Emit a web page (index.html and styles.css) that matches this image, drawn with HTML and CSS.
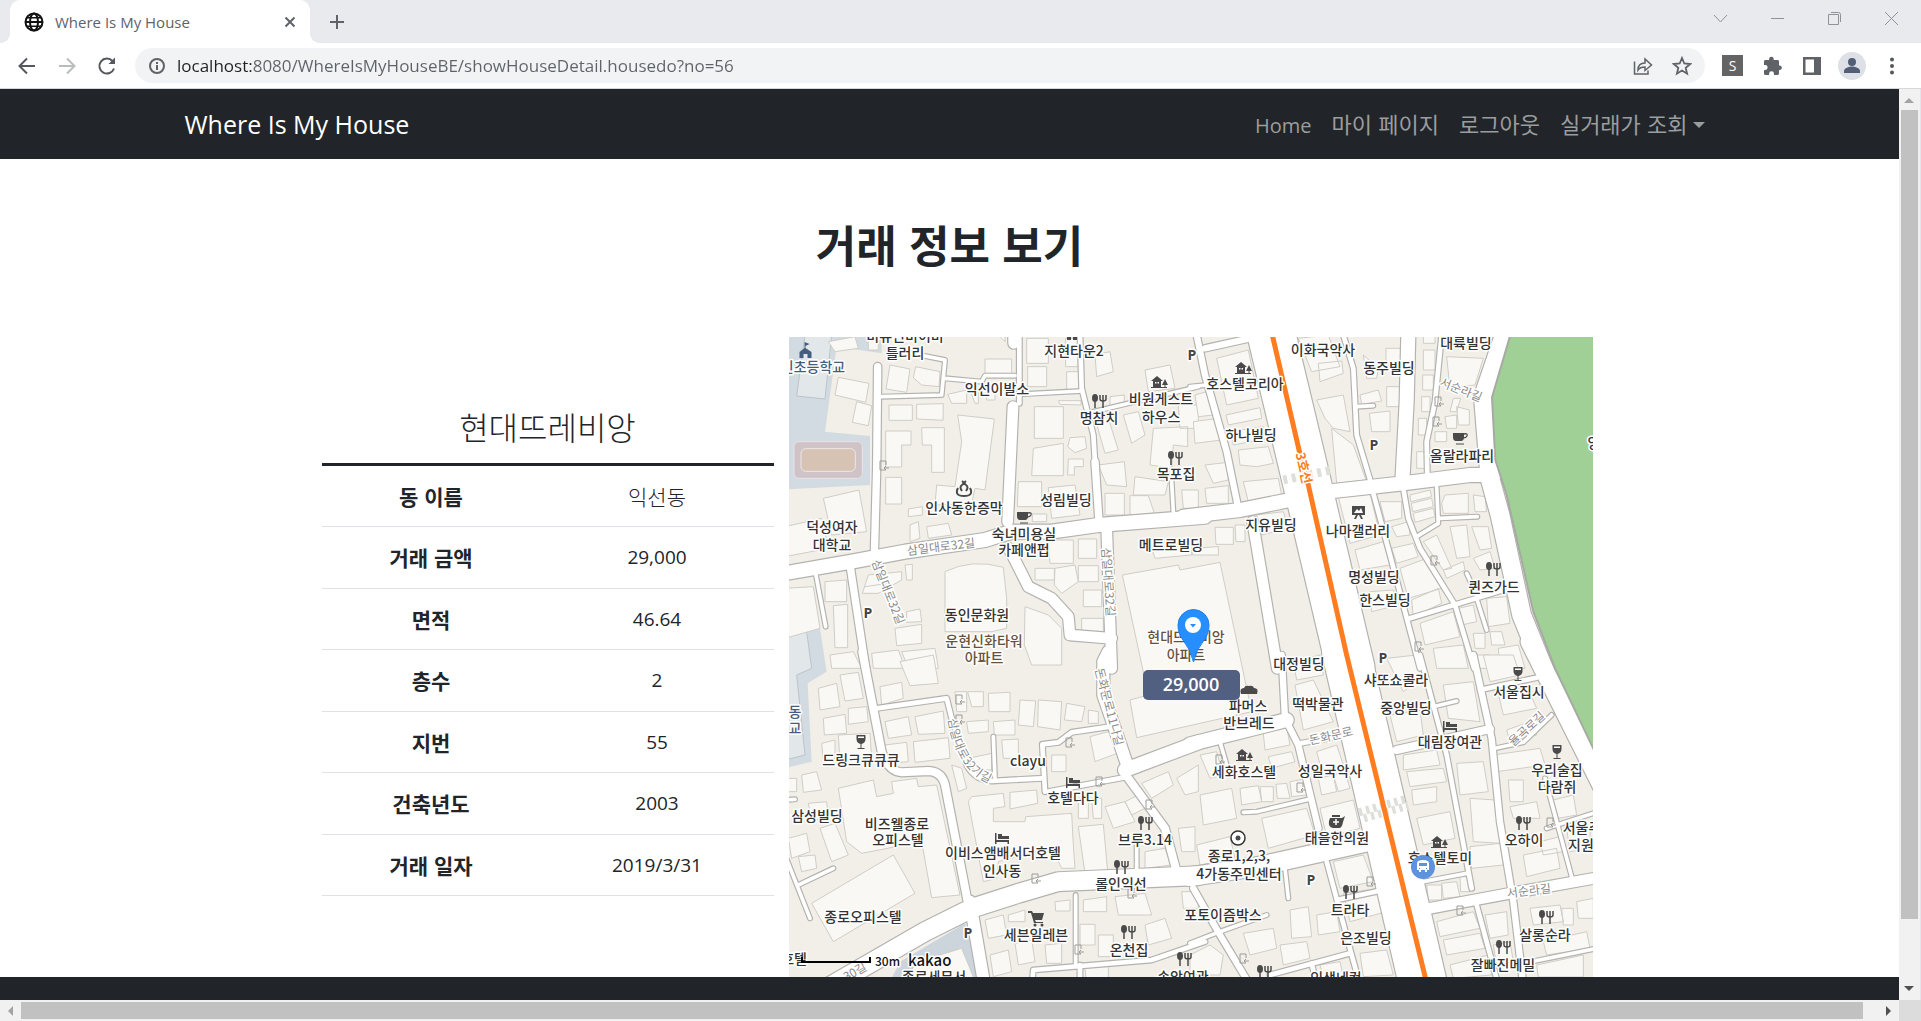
FILE: index.html
```html
<!DOCTYPE html>
<html lang="ko">
<head>
<meta charset="utf-8">
<title>Where Is My House</title>
<link rel="stylesheet" href="styles.css">
</head>
<body>
<div class="window">
  <header class="tabstrip">
    <div class="tab">
      <svg class="ico" width="20" height="20" viewBox="0 0 20 20" fill="none" stroke="#111" stroke-width="2"><circle cx="10" cy="10" r="8.5"/><ellipse cx="10" cy="10" rx="4" ry="8.5"/><path d="M1.5 10h17"/><path d="M3 5.8h14M3 14.2h14" stroke-width="1.4"/></svg>
      <span class="tab-title">Where Is My House</span>
      <button class="plain" aria-label="Close tab"><svg width="12" height="12" viewBox="0 0 12 12" stroke="#5f6368" stroke-width="2"><path d="M1.5 1.5l9 9M10.500 1.500l-9 9"/></svg></button>
    </div>
    <button class="plain newtab" aria-label="New tab"><svg width="16" height="16" viewBox="0 0 16 16" stroke="#5f6368" stroke-width="2"><path d="M8 1v14M1 8h14"/></svg></button>
    <div class="wincontrols">
      <button class="plain" aria-label="Search tabs"><svg width="15" height="15" viewBox="0 0 15 15" fill="none" stroke="#8f9296"><path d="M1 4l6.500 7L14 4"/></svg></button>
      <button class="plain" aria-label="Minimize"><svg width="15" height="15" viewBox="0 0 15 15" stroke="#8f9296"><path d="M1 7.500h13"/></svg></button>
      <button class="plain" aria-label="Restore"><svg width="15" height="15" viewBox="0 0 15 15" fill="none" stroke="#8f9296"><path d="M1.500 3.500h10v10h-10zM4 1.500h7.500q2 0 2 2V11"/></svg></button>
      <button class="plain" aria-label="Close"><svg width="15" height="15" viewBox="0 0 15 15" stroke="#8f9296"><path d="M1 1l13 13M14 1L1 14"/></svg></button>
    </div>
  </header>

  <div class="toolbar">
    <div class="navbuttons">
      <button class="plain" aria-label="Back"><svg width="20" height="20" viewBox="0 0 20 20" fill="none" stroke="#54585d" stroke-width="2"><path d="M18 10H3M10 2.500L2.500 10l7.500 7.500"/></svg></button>
      <button class="plain" aria-label="Forward"><svg width="20" height="20" viewBox="0 0 20 20" fill="none" stroke="#babcbe" stroke-width="2"><path d="M2 10h15M10 2.500l7.500 7.500-7.500 7.500"/></svg></button>
      <button class="plain" aria-label="Reload"><svg width="20" height="20" viewBox="0 0 20 20" fill="none" stroke="#54585d" stroke-width="2"><path d="M17 12.500A7.500 7.500 0 1 1 15.500 5"/><path d="M18 1.500v6.500h-6.500z" fill="#54585d" stroke="none"/></svg></button>
    </div>
    <div class="omnibox">
      <svg width="18" height="18" viewBox="0 0 18 18" fill="none" stroke="#5f6368" stroke-width="2"><circle cx="9" cy="9" r="7"/><path d="M9 8v5M9 5v2"/></svg>
      <input class="url" aria-label="Address" value="localhost:8080/WhereIsMyHouseBE/showHouseDetail.housedo?no=56">
      <button class="plain" aria-label="Share"><svg width="20" height="20" viewBox="0 0 20 20" fill="none" stroke="#5f6368" stroke-width="1.500"><path d="M1.500 5.500V18H15v-3.500M5 14c0-5 3-7 7-7V3l6.500 6-6.500 5.500V11c-3.500 0-5.500.5-7 3z"/></svg></button>
      <button class="plain" aria-label="Bookmark"><svg width="20" height="20" viewBox="0 0 20 20" fill="none" stroke="#5f6368" stroke-width="1.800"><path d="M10 2l2.300 5.500 5.900.5-4.500 3.900 1.400 5.800L10 14.600l-5.100 3.100 1.400-5.800L1.800 8l5.900-.5z"/></svg></button>
    </div>
    <div class="extensions">
      <button class="plain ext-s" aria-label="S extension">S</button>
      <button class="plain" aria-label="Extensions"><svg width="20" height="20" viewBox="0 0 20 20" fill="#5f6368"><path d="M17 9.500h-1V5.500c0-1-.7-1.500-1.500-1.500h-3.800V3a2.300 2.300 0 0 0-4.600 0v1H2.500C1.600 4 1 4.600 1 5.500v3.600h1.200a2.400 2.400 0 0 1 0 4.900H1v3.500c0 .9.600 1.500 1.500 1.500h3.600v-1.200a2.400 2.400 0 0 1 4.900 0V19h3.500c.8 0 1.500-.6 1.500-1.500V14h1a2.300 2.300 0 0 0 0-4.500z"/></svg></button>
      <button class="plain" aria-label="Side panel"><svg width="18" height="18" viewBox="0 0 18 18"><path fill="#5f6368" fill-rule="evenodd" d="M0 0h18v18H0zM2.500 2.500v13h8.500v-13z"/></svg></button>
      <button class="plain" aria-label="Profile"><svg width="28" height="28" viewBox="0 0 28 28"><circle cx="14" cy="14" r="14" fill="#dde1e7"/><circle cx="14" cy="10" r="4" fill="#525e75"/><path d="M6 21v-2c0-3 5-4.500 8-4.500s8 1.500 8 4.500v2z" fill="#525e75"/></svg></button>
      <button class="plain" aria-label="Menu"><svg width="6" height="18" viewBox="0 0 6 18" fill="#54585d"><circle cx="3" cy="2.500" r="2"/><circle cx="3" cy="9" r="2"/><circle cx="3" cy="15.500" r="2"/></svg></button>
    </div>
  </div>

  <div class="viewport">
    <div class="page">
      <nav class="navbar">
        <div class="navbar-inner">
          <a class="brand" href="#">Where Is My House</a>
          <ul class="menu">
            <li><a class="latin" href="#">Home</a></li>
            <li><a href="#">마이 페이지</a></li>
            <li><a href="#">로그아웃</a></li>
            <li><a class="dropdown" href="#">실거래가 조회</a></li>
          </ul>
        </div>
      </nav>
      <main>
        <h1>거래 정보 보기</h1>
        <div class="detail">
          <section class="info">
            <h2>현대뜨레비앙</h2>
            <table>
              <tbody>
                <tr><th scope="row">동 이름</th><td>익선동</td></tr>
                <tr><th scope="row">거래 금액</th><td class="num">29,000</td></tr>
                <tr><th scope="row">면적</th><td class="num">46.64</td></tr>
                <tr><th scope="row">층수</th><td class="num">2</td></tr>
                <tr><th scope="row">지번</th><td class="num">55</td></tr>
                <tr><th scope="row">건축년도</th><td class="num">2003</td></tr>
                <tr><th scope="row">거래 일자</th><td class="num">2019/3/31</td></tr>
              </tbody>
            </table>
          </section>
          <svg class="map" viewBox="0 0 804 640" role="img" aria-label="지도">
            <defs>
              <g id="roads">
                <g transform="translate(-12 -6)">
                  <path class="w42" d="M-20 718L200 680 360 650 600 615 680 590 800 590 940 570 1260 545"/>
                  <path class="w22" d="M278 95L275 400 268 660M195 690L242 1000"/>
                  <path class="w14" d="M703 0V205"/><path class="w34" d="M686 0V25M684 215L668 560M965 580L980 1000M672 640L730 755 800 790 850 845 855 900 980 910"/>
                  <path class="w12" d="M290 185L470 180 480 75 380 55M480 130L590 140 600 122 690 122M700 178L890 168M925 230L1240 155M90 705L122 875M1160 440L1165 530"/>
                  <path class="w14" d="M885 0L890 160 925 300 930 380"/><path class="w22" d="M930 380L942 560"/>
                </g>
                <g transform="translate(1203 -6)">
                  <path class="w145" d="M240 -20L350 440 482 1000"/>
                  <path class="w20" d="M20 0L45 120 110 350 145 520M45 40L180 10"/>
                  <path class="w42" d="M-20 545L150 525 300 495M430 468L640 445 840 420 910 420M655 0L650 200 637 440"/>
                  <path class="w14" d="M460 0L490 100 500 300 542 440M755 0L735 200 710 320 712 420M550 475L600 660 690 1000M640 460L655 550 690 640 795 810 852 1000M660 850L940 765"/>
                  <path class="w12" d="M0 155L50 150M500 215L550 212M740 455L745 565 680 605M750 550L862 545M860 790L890 885M830 715L860 780"/>
                  <path class="w34" d="M188 560L262 1000"/>
                  <path class="w60" d="M950 -20L880 185 900 430 930 540 995 840 1060 1000"/>
                </g>
                <g transform="translate(-12 954)">
                  <path class="w24" d="M232 -10L290 290Q310 350 350 352L430 348Q475 350 482 400L550 750"/>
                  <path class="w14" d="M275 160L485 130 500 190 545 330Q570 375 620 378L770 370M780 410L772 268 820 262 860 232 975 215M790 410L1030 365M740 1000L745 945 1100 915 1260 860M885 930V990"/>
                  <path class="w12" d="M625 245L630 370M872 720V930M1055 540V650M0 600L75 790M40 690L145 640M0 435L30 433"/>
                  <path class="w38" d="M970 -10L955 20V120L1030 340M555 740L600 1000"/>
                  <path class="w42" d="M1020 345L1240 262"/>
                  <path class="w24" d="M1030 370L1140 520 1175 650"/>
                  <path class="w60" d="M90 1020L420 830 560 760 700 715 820 680 1240 662"/>
                </g>
                <g transform="translate(1203 954)">
                  <path class="w145" d="M468 -10L702 1000"/>
                  <path class="w42" d="M0 268L290 195"/><path class="w60" d="M0 665L200 635 560 555"/>
                  <path class="w20" d="M275 0L285 190 325 270 385 520M10 700L90 840 180 990M850 0L905 250 930 500 970 740 1000 990"/>
                  <path class="w14" d="M330 265L500 235M410 620L485 900 510 990M440 735L580 705M240 960L480 895M365 925L380 990M690 0L770 300 845 700M870 105L1040 68M860 750L925 990"/>
                  <path class="w12" d="M90 260L110 330M160 472L200 470 360 432M285 640L295 730M0 865L90 830 230 780M730 155L800 138M915 280L1000 262 1085 180M1065 370L1145 665M1070 520L1240 465M700 680L830 655M1000 925L1220 880"/>
                  <path class="w24" d="M620 285L900 222"/><path class="w34" d="M720 760L960 715 1240 665"/>
                  <path class="w60" d="M1020 -40L1240 400"/>
                </g>
              </g>
              <g id="food"><ellipse cx="-4" cy="-3" rx="3" ry="4"/><path d="M-4 0v7M1 -6v4q0 2 3 2t3-2v-4M4 -6V7" fill="none" stroke="currentColor" stroke-width="1.500"/></g>
              <g id="hostel"><path d="M-8 -1L-2 -6l6 5H2v6H-6v-6z"/><path d="M6 -3l3 6H3zM5.500 3h1v3h-1zM-8 5H8v1H-8z"/><path d="M-4 0h1.500v1.500H-4zM-1.500 0H0v1.500h-1.500z" fill="#fff"/></g>
              <g id="cup"><path d="M-7 -5H4v4q0 4-3 4h-5q-3 0-3-4zM-4 5.500h8v1h-8z"/><path d="M4 -4q4-1 3 2-1 2-4 2" fill="none" stroke="currentColor" stroke-width="1.300"/></g>
              <g id="bed"><path d="M-7 -5h1.500v7H7v4H5.500V4h-11v2H-7zM-4 -4h4v2h7v3H-4z"/></g>
              <g id="glass"><path d="M-4.500 -7h9v4q0 4-4 5v4h3v1h-7v-1h3V2q-4-1-4-5z"/><path d="M-3 -5.500h6v1.500h-6z" fill="#fff"/></g>
              <g id="gate"><path d="M2 3h-6v-9h6v4M5 1H1m1-2L0 1l2 2" fill="none" stroke="#9b9b98"/></g>
            </defs>
            <rect width="804" height="640" fill="#f2efe9"/>
            <g transform="scale(.33333)">
              <g transform="translate(-12 -6)">
                <path fill="#d3dbe2" d="M0 0H290V55L155 35 120 290 255 303V450L0 463zM0 890L105 880 125 1010 68 1045 80 1280 0 1300z"/>
                <path fill="#e2e7ea" stroke="#bcc4c9" stroke-width="3" d="M60 0H140L120 192 35 183zM0 895L65 890 80 1000 35 1020 60 1260 0 1275z"/>
                <rect x="27" y="320" width="205" height="110" rx="14" fill="#cfc3c8" stroke="#e9e3e6" stroke-width="3"/>
                <rect x="48" y="341" width="163" height="68" rx="14" fill="#d6c3b4" stroke="#efe6e2" stroke-width="3"/>
              </g>
              <path transform="translate(-12 954)" fill="#ccd5dc" d="M540 805L605 990H310L345 920z"/>
              <g class="building">
                <path transform="translate(-12 -6)" d="M160 127L252 145 242 202 150 180zM215 200L260 212 250 272 202 262zM315 90L375 102 365 172 303 162zM392 95L465 110 462 155 410 150 385 128zM600 72H680V115H600zM312 210H382V256H312zM395 208L475 206 474 256 395 252zM302 288H378V330H350V396H302zM410 278H478V412H440V330H412zM518 240L628 252 600 465 570 460 560 505 450 510 455 450 510 455 530 320zM302 427H350V507H302zM115 490L222 465 245 590 140 600zM0 575L110 550 130 640 0 665zM370 522L412 515V540L370 545zM425 575L490 565 500 600 430 610zM488 178L500 205H545V165zM555 165H580V205H570zM605 170H630V195H605zM728 95H785V155H728zM725 10H790V85H725zM845 110H885V165H845zM842 10H880V95H842zM820 197H888V210L825 208zM748 215H835V310H748zM745 340L835 325V422H740zM855 308L900 305 905 340 870 353 848 335zM850 372H895V395H868V420H848zM700 440H770V515H697zM790 458L870 450 885 540 800 550zM742 537H785V560H742zM480 710Q560 670 655 697L665 790V880L620 890H480zM250 720L350 710V735L280 775H232zM360 690L382 688V735H365zM120 740L185 735V800H120zM145 812L188 808V938H150zM0 760L85 755 105 880 0 910zM330 880L410 868V925L335 932zM365 830L405 822 410 860 365 862zM350 950L450 940 460 1000H370zM260 955L340 945 360 1000H265zM135 960L205 950 230 1000H140zM375 570L400 560 405 610 375 620zM240 755L310 745 320 770"/>
                <path transform="translate(-12 -6)" d="M790 615H865V685H795zM880 612H935V670H880zM750 700H808V735H750zM810 700L870 690 880 740 830 775 808 750zM880 692H940V740H880zM895 765H950V815H895zM720 815L790 840 830 880V990H740L718 930zM890 850H955V890H890zM1012 720L1180 690 1185 705 1305 682 1400 1130 1055 1208 1035 1095 1090 1080zM930 250L965 235 1000 345 960 355zM975 185L1018 180V205L975 212zM1015 240L1060 230 1080 300 1040 325zM1105 280L1208 275V335L1165 330 1160 400 1095 390zM1080 105L1155 90 1170 160 1090 170zM1180 210H1240V280H1185zM1050 425L1150 440 1140 480 1045 480zM1035 482H1090L1110 540H1035zM960 475H1018V540H960zM940 390L1018 380 1025 455 965 450zM930 60L975 50 985 110 935 125zM1190 465H1240V520H1195zM1100 640L1220 625V660L1110 670zM130 20L210 5 220 40 150 50zM250 5H280V45H250zM640 0H660V20z"/>
                <path transform="translate(1203 -6)" d="M80 70L175 45 205 190 110 210zM108 240L210 218 215 250 115 270zM10 260L85 250 95 315 15 325zM15 180L50 170 70 240 25 245zM120 290L220 275 235 310 130 330zM145 345L235 335 250 385 200 395 150 390zM45 390L115 382V435L70 445zM160 440L265 430 275 480 175 500zM45 460L115 452V505H50zM325 10L415 0 450 95 365 110zM385 85L455 78 460 115 390 140zM380 195L460 180 480 290 430 280 405 250zM425 280L490 330 528 435 440 445zM510 180L565 165 575 198 515 208zM538 235L600 228V290H545zM590 155H640V215H590zM588 40H638V90H588zM520 60L565 100 560 130H530zM700 45H735V105H700zM698 120H730V165H698zM695 185H720V230H695zM685 250H710V300H685zM680 350H705V400H680zM770 65L880 70 855 150 780 160zM790 190H812L800 230H780zM800 215L838 225V270H805zM765 245L800 240V280H770zM735 290H770V320H735zM700 0H735V25H700zM445 485L540 475 570 600 480 625zM495 645L580 620 600 690 510 705zM540 770L610 765 625 810 545 830zM570 500H635V550L585 560zM605 575L655 560 660 600 620 605zM605 640L670 625 685 665 620 685zM630 700L710 670 755 760 655 790zM665 795L745 760 755 805 670 845z"/>
                <path transform="translate(1203 -6)" d="M660 480L720 465 725 485 662 500zM664 505L725 490 730 515 668 530zM670 535L730 520 735 545 675 562zM765 480L835 475V535H760L755 505zM850 480L885 485 890 530H855zM700 620L740 600 785 700 760 705zM780 575L830 570 840 665 800 670zM845 575H895L905 640 870 645zM760 705L820 680 825 705 770 730zM850 670L900 650 915 700 870 705zM890 790L950 785 960 865 895 875zM805 820L850 810 860 860 815 870zM690 865L790 830 810 905 705 930zM900 890H935L945 930H905zM850 895H885V940H855zM730 940L820 930 835 1000H740zM855 960H900V1000H860zM925 940L985 930 1005 1000H930zM75 577H130V628H78zM135 570H165V620H138zM5 640L85 635V660H8zM200 540L280 530 295 580 215 600z"/>
                <path transform="translate(-12 954)" d="M100 100L155 85 165 155 105 165zM165 60L220 52 235 130 180 138zM115 190L180 178 185 235 118 240zM190 160L245 155 250 200 190 208zM160 240L255 235 260 310 165 320zM285 95L350 82 355 130 290 150zM345 20L445 0 460 85 375 92zM300 200L370 185 380 240 310 250zM390 185L475 168 480 235 400 238zM385 260L490 248 495 310 390 322zM300 270L365 262 370 320 310 325zM110 265L150 255V310L115 315zM160 400L265 375 275 425 325 415 320 380 395 370 400 395 455 390 525 720 440 728 410 560 230 595 185 560zM80 745L325 600 390 715 145 860zM105 520L150 505 190 600 140 620zM70 445L125 440 130 490 80 495zM50 360L95 350 110 405 55 412zM10 550L65 535 75 590 20 610zM40 605L90 600 95 640 50 650zM0 370H35V410H0zM510 110H545V170H515zM548 110H595V155H560zM610 115L675 112V170H612zM705 135L752 138 745 215 700 210zM760 135L830 140 825 225 758 215zM845 145L900 155 890 200 838 195zM910 165L940 170V205H910zM625 200L690 195V240H628zM545 200L610 195V230L550 235zM650 255L700 252V310H655zM550 310L620 295V345H560zM500 330L530 340 545 400 520 410zM800 300H843V350H800zM915 245L970 230 1010 290 930 320z"/>
                <path transform="translate(-12 954)" d="M560 425L655 415 660 455 625 460V500H720L722 485 860 475 865 570 870 640 830 640 800 575 640 620 635 670 595 680 550 440zM675 412L755 405 758 445 675 462zM880 515L955 508 968 650 900 655zM880 430H910V490H880zM920 430H950V490H925zM1080 590L1140 580 1160 630 1080 640zM960 455L1020 440 1050 500 985 520zM1020 440L1060 420 1080 460 1040 480zM1175 370L1240 330V410L1200 420zM1070 385L1150 350 1165 390 1100 430zM1180 520L1230 515V590H1190zM810 740L855 735V768H812zM895 735L965 725V770H895zM990 725L1080 715 1100 780H1000zM600 795L655 780 665 840 610 850zM670 780L720 765V800H670zM615 900L670 885 680 950 625 965zM690 865L740 855 750 920 700 930zM885 808H930V870H885zM940 840H985V905H940zM1080 810L1140 790 1160 850 1090 870zM1190 710H1240V760H1195zM780 870L830 865V925H785zM900 940L970 930V990H905zM400 920L530 880 575 990H340z"/>
                <path transform="translate(1203 954)" d="M310 20L390 0 400 60 320 75zM315 90L370 75 430 200 340 225zM220 235L290 215 300 270 225 285zM235 305L305 290 315 320 245 340zM30 420L125 400 140 490 40 510zM30 300L80 290 100 360 60 370zM150 400L205 392 215 440 155 450zM210 395H250V440H215zM258 388L290 385 300 430H262zM300 380L345 372 350 420 305 425zM380 290L440 270 460 330 395 345zM385 370L430 360 440 410 395 420zM430 360L465 350 480 400 445 410zM390 460L490 435 510 520 410 545zM215 490L350 460 375 540 235 580zM20 570L120 545 135 610 30 630zM590 10L680 0 700 60 640 110zM640 300L740 285 750 330 640 345zM650 350L760 340 770 380 660 395zM665 405L740 395V440L670 450zM680 490L780 470 795 550 700 570zM800 325L880 320 895 410 810 420zM840 430L915 435 935 565 850 560zM840 575L930 565 940 630 845 640zM710 690H755V735H715zM755 685L800 680 810 725 760 730zM810 665H840V710H812zM740 800L850 770 870 820 750 845zM760 855L870 835 885 880 770 900zM780 930L895 900 905 960 790 970zM885 780L950 770 955 840 900 850zM910 870L960 860 970 920 920 930z"/>
                <path transform="translate(1203 954)" d="M1020 760L1110 750 1120 800 1030 810zM1115 760H1150V810H1120zM1160 740L1210 730V790H1165zM955 375H1000V440H960zM960 455L1040 440 1050 490H970zM1090 435L1150 420 1160 480 1105 490zM1050 560L1110 545 1120 590 1060 600zM1130 520H1200V580L1140 590zM1000 600L1100 580 1110 640 1010 665zM910 300L1050 280 1065 330 920 350zM925 115L1010 95 1040 160 940 180zM760 90L850 80 870 200 775 190zM430 620L520 600 550 680 450 700zM460 715L570 700 590 770 480 800zM300 765L355 755 365 845 305 850zM380 780L440 770 450 830 385 840zM510 895L590 885 610 960 520 965zM0 900L60 870 100 900 90 960 0 960zM160 835L250 820 260 880 180 900zM270 870L350 860 360 910 280 930zM390 930L450 920 460 965 400 970zM880 0L970 0 990 60 900 80zM600 180L690 165 700 240 620 260zM950 225L1020 200 1040 240 960 260zM1060 860L1190 830 1200 880 1070 900zM1040 930L1180 900V966H1045z"/>
              </g>
              <use href="#roads" class="casing"/>
              <use href="#roads" class="surface"/>
              <path transform="translate(1203 -6)" fill="#a0d096" stroke="#a7aaa4" stroke-width="6" d="M964 -10L906 187 916 375 950 480 1030 830 1095 1000 1250 1325V-10z"/>
              <g fill="none" stroke="#dedfd9" transform="translate(1203 -6)"><path stroke-width="26" stroke-dasharray="12 14" d="M280 435L425 405"/><path stroke-width="24" stroke-dasharray="10 12" d="M507 1432L655 1390"/><path stroke-width="24" stroke-dasharray="10 12" d="M522 1450L655 1412"/></g>
              <path fill="none" stroke="#ff7d20" stroke-width="15" d="M1449 -10L1536 364 1558 444 1673 954 1911 1930"/>
            </g>

            <g><use href="#gate" x="95" y="130"/><use href="#gate" x="650" y="66"/><use href="#gate" x="648" y="86"/><use href="#gate" x="646" y="225"/><use href="#gate" x="630" y="311"/><use href="#gate" x="171" y="364"/><use href="#gate" x="171" y="384"/><use href="#gate" x="281" y="407"/><use href="#gate" x="311" y="446"/><use href="#gate" x="361" y="469"/><use href="#gate" x="247" y="543"/><use href="#gate" x="343" y="558"/><use href="#gate" x="290" y="614"/><use href="#gate" x="431" y="424"/><use href="#gate" x="512" y="452"/><use href="#gate" x="582" y="546"/><use href="#gate" x="672" y="575"/><use href="#gate" x="762" y="487"/><use href="#gate" x="455" y="623"/></g>

            <g class="street">
              <text x="152" y="214" transform="rotate(-7 152 210)">삼일대로32길</text>
              <text x="319" y="249" transform="rotate(86 319 245)">삼일대로32길</text>
              <text x="99" y="259" transform="rotate(68 99 255)">삼일대로32길</text>
              <text x="320" y="374" transform="rotate(75 320 370)">돈화문로11나길</text>
              <path id="curve" d="M159 382Q168 438 206 448" fill="none" stroke="none"/>
              <text class="along"><textPath href="#curve">삼일대로32가길</textPath></text>
              <text x="672" y="57" transform="rotate(22 672 53)">서순라길</text>
              <text x="740" y="558" transform="rotate(-7 740 554)">서순라길</text>
              <text x="542" y="403" transform="rotate(-13 542 399)">돈화문로</text>
              <text x="738" y="396" transform="rotate(-42 738 392)">율곡로길</text>
              <text x="66" y="639" transform="rotate(-30 66 635)">30길</text>
            </g>
            <text class="subway" x="515" y="136" transform="rotate(77 515 131)">3호선</text>

            <g class="poi">
              <text x="116" y="4">비유인비이비</text><text x="116" y="21">틀러리</text><text x="285" y="19">지현타운2</text>
              <text x="208" y="57">익선이발소</text><text x="372" y="67">비원게스트</text><text x="372" y="85">하우스</text>
              <text x="310" y="86">명참치</text><text x="387" y="142">목포집</text><text x="175" y="176">인사동한증막</text>
              <text x="277" y="168">성림빌딩</text><text x="235" y="202">숙녀미용실</text><text x="235" y="218">카페앤펍</text>
              <text x="43" y="195">덕성여자</text><text x="43" y="213">대학교</text><text x="382" y="213">메트로빌딩</text><text x="188" y="283">동인문화원</text>
              <text x="534" y="18">이화국악사</text><text x="677" y="11">대륙빌딩</text><text x="600" y="36">동주빌딩</text>
              <text x="456" y="52">호스텔코리아</text><text x="462" y="103">하나빌딩</text><text x="673" y="124">올랄라파리</text>
              <text x="482" y="193">지유빌딩</text><text x="569" y="199">나마갤러리</text><text x="585" y="245">명성빌딩</text>
              <text x="596" y="268">한스빌딩</text><text x="705" y="255">퀸즈가드</text><text x="510" y="332">대정빌딩</text><text x="805" y="111">양</text>
              <text x="72" y="428">드링크큐큐큐</text><text x="239" y="429">clayu</text><text x="284" y="466">호텔다다</text>
              <text x="28" y="484">삼성빌딩</text><text x="108" y="492">비즈웰종로</text><text x="109" y="508">오피스텔</text>
              <text x="214" y="521">이비스앰배서더호텔</text><text x="213" y="539">인사동</text><text x="356" y="508">브루3.14</text>
              <text x="332" y="552">롤인익선</text><text x="74" y="585">종로오피스텔</text><text x="247" y="603">세븐일레븐</text>
              <text x="340" y="618">온천집</text><text x="5" y="627">호텔</text><text x="145" y="645">종로세무서</text><text x="394" y="645">송암여관</text>
              <text x="459" y="374">파머스</text><text x="460" y="391">반브레드</text><text x="529" y="372">떡박물관</text>
              <text x="607" y="348">샤또쇼콜라</text><text x="617" y="376">중앙빌딩</text><text x="730" y="360">서울집시</text>
              <text x="661" y="410">대림장여관</text><text x="768" y="438">우리술집</text><text x="768" y="455">다람쥐</text>
              <text x="455" y="440">세화호스텔</text><text x="541" y="439">성일국악사</text><text x="548" y="506">태을한의원</text>
              <text x="450" y="524">종로1,2,3,</text><text x="450" y="542">4가동주민센터</text><text x="651" y="526">호스텔토미</text>
              <text x="735" y="508">오하이</text><text x="793" y="496">서울주</text><text x="792" y="513">지원</text>
              <text x="434" y="583">포토이즘박스</text><text x="561" y="578">트라타</text><text x="577" y="606">은조빌딩</text>
              <text x="756" y="603">살롱순라</text><text x="714" y="633">잘빠진메밀</text><text x="547" y="646">인생네컷</text>
            </g>
            <g class="poi school"><text x="24" y="35">인초등학교</text><text x="6" y="380">동</text><text x="6" y="396">교</text></g>
            <g class="poi apartment"><text x="195" y="309">운현신화타워</text><text x="195" y="326">아파트</text><text x="397" y="305">현대뜨레비앙</text><text x="397" y="323">아파트</text></g>
            <g class="parking"><text x="79" y="281">P</text><text x="403" y="23">P</text><text x="585" y="113">P</text><text x="594" y="326">P</text><text x="179" y="601">P</text><text x="522" y="548">P</text></g>

            <g class="icons">
              <use href="#food" x="310" y="64"/><use href="#food" x="386" y="121"/><use href="#food" x="704" y="232"/><use href="#food" x="356" y="486"/><use href="#food" x="332" y="530"/><use href="#food" x="339" y="595"/><use href="#food" x="395" y="622"/><use href="#food" x="734" y="486"/><use href="#food" x="561" y="555"/><use href="#food" x="757" y="580"/><use href="#food" x="714" y="610"/><use href="#food" x="475" y="635"/>
              <use href="#hostel" x="370" y="45"/><use href="#hostel" x="454" y="31"/><use href="#hostel" x="455" y="418"/><use href="#hostel" x="650" y="505"/>
              <use href="#cup" x="235" y="180"/><use href="#cup" x="671" y="101"/>
              <use href="#bed" x="284" y="445"/><use href="#bed" x="213" y="501"/><use href="#bed" x="661" y="389"/>
              <use href="#glass" x="72" y="405"/><use href="#glass" x="729" y="337"/><use href="#glass" x="768" y="415"/>
              <path d="M278 0h4v3h-4zM284 0h4v3h-4z"/>
              <path fill="#455d7e" d="M15.500 5l5 2-4 2v2l6 4v6h-4v-4h-4v4h-4v-6l5-4z"/>
              <path fill="none" stroke="currentColor" stroke-width="2" d="M169 151q-4 8 6 8t6-8M173 154q-3-4 0-6t0-4M177 154q3-4 0-6t0-4"/>
              <path d="M563 169h13v9h-4l2 4h-2l-2-4h-1l-2 4h-2l2-4h-4z"/><path fill="#fff" d="M565 176l3-4 2 2 2-3 2 5z"/>
              <path d="M452 357q-2-6 3-6 1-3 5-2 4-1 5 2 5 0 3 6z"/>
              <path d="M541 481h12l3-2-2 6q-1 6-4 6h-6q-5-1-4-7zM543 478h8v2h-8z"/><path stroke="#fff" stroke-width="1.500" d="M547 482v6M544 485h6"/>
              <circle cx="449" cy="501" r="7" fill="#fff" stroke="#333" stroke-width="1.500"/><circle cx="449" cy="501" r="2.500"/>
              <path d="M239 574h4l1 2h11l-2 7h-7l1 2h7v1h-9l-3-10h-3z"/><circle cx="246" cy="588" r="1.500"/><circle cx="253" cy="588" r="1.500"/>
            </g>
            <circle cx="634" cy="530" r="12" fill="#5f92dd"/><path fill="#fff" d="M629 524q5-2 10 0 1 1 1 3v6h-2v2h-2v-2h-4v2h-2v-2h-2v-6q0-2 1-3z"/><path fill="#5f92dd" d="M630 526h8v3h-8zM630 531h1v1h-1zM637 531h1v1h-1z"/>

            <path d="M13 620v5h68v-5" fill="none" stroke="#000" stroke-width="2"/>
            <text class="scale" x="86" y="629">30m</text><text class="kakao" x="119" y="629">kakao</text>

            <path fill="#258fff" stroke="#1b80ec" d="M404.500 325Q402 313 394 303 389 297 389 288a15.500 15.500 0 0 1 31 0q0 9-5 15-8 10-10.500 22z"/>
            <circle cx="404" cy="288" r="8" fill="#fff"/><path fill="#258fff" d="M401 287h6l-3 3.500z"/>
            <rect x="354" y="333" width="97" height="30" rx="5" fill="#515f80"/>
            <text class="price" x="402" y="354">29,000</text>
          </svg>
        </div>
      </main>
      <footer></footer>
    </div>
    <div class="vscroll" aria-hidden="true"><i class="up"></i><b></b><i class="down"></i></div>
    <div class="hscroll" aria-hidden="true"><i class="left"></i><b></b><i class="right"></i></div>
    <div class="corner"></div>
  </div>
</div>
</body>
</html>
```
FILE: styles.css
```css
* { box-sizing: border-box; }
body {
  margin: 0;
  background: #fff;
  color: #212529;
  font-family: "Open Sans", "Noto Sans CJK KR", sans-serif;
}
.window { display: flex; flex-direction: column; height: 100vh; overflow: hidden; }
.plain { display: flex; align-items: center; justify-content: center; padding: 0; border: 0; background: none; }
svg { display: block; flex: none; }

/* Browser frame */
.tabstrip { display: flex; align-items: center; height: 43px; padding-left: 10px; background: #e8eaed; }
.tab {
  position: relative;
  display: flex;
  align-items: center;
  gap: 11px;
  width: 300px;
  height: 43px;
  padding: 0 14px;
  border-radius: 10px 10px 0 0;
  background: #fff;
}
.tab::before, .tab::after {
  content: "";
  position: absolute;
  bottom: 0;
  width: 10px;
  height: 10px;
}
.tab::before { left: -10px; background: radial-gradient(circle at 0 0, #e8eaed 10px, #fff 10px); }
.tab::after { right: -10px; background: radial-gradient(circle at 100% 0, #e8eaed 10px, #fff 10px); }
.tab-title { flex: 1; font-size: 15px; color: #5f6368; }
.newtab { margin-left: 19px; }
.wincontrols { display: flex; gap: 42px; margin: 0 22px 7px auto; }
.toolbar {
  display: flex;
  align-items: center;
  height: 46px;
  padding: 0 26px 0 17px;
  border-bottom: 1px solid #d5d7da;
}
.navbuttons { display: flex; gap: 20px; width: 118px; }
.omnibox {
  display: flex;
  flex: 1;
  align-items: center;
  gap: 19px;
  height: 35px;
  padding: 0 13px;
  border-radius: 18px;
  background: #f1f3f4;
}
.url {
  flex: 1;
  min-width: 0;
  margin-left: -8px;
  padding: 0;
  border: 0;
  outline: 0;
  font: 17px "Open Sans", sans-serif;
  color: transparent;
  background: linear-gradient(90deg, #202124 75px, #5f6368 75px);
  -webkit-background-clip: text;
  background-clip: text;
}
.extensions { display: flex; align-items: center; gap: 20px; margin-left: 17px; }
.extensions .plain:nth-child(4) { margin: 0 3px 0 -3px; }
.extensions .plain:nth-child(5) { margin-left: 0; }
.ext-s { width: 21px; height: 21px; background: #646464; color: #fff; font: 14px "Open Sans", sans-serif; }

/* Scroll area */
.viewport {
  display: grid;
  flex: 1;
  min-height: 0;
  grid-template: minmax(0, 1fr) 21px / minmax(0, 1fr) 22px;
}
.page { display: flex; flex-direction: column; overflow: hidden; }
.vscroll, .hscroll { display: flex; align-items: center; background: #f1f1f1; }
.vscroll { flex-direction: column; padding: 9px 1px 9px 0; border-right: 1px solid #e4e4ec; }
.hscroll { padding: 0 8px; }
.vscroll b { width: 17px; height: 809px; margin: 7px 0 auto; background: #c1c1c1; }
.hscroll b { flex: 1; height: 17px; margin: 0 23px 0 8px; background: #c1c1c1; }
.corner { background: #dcdcdc; }
.up, .down { border: 5px solid transparent; }
.up { border-top: 0; border-bottom-color: #a3a3a3; }
.down { border-bottom: 0; border-top-color: #505050; }
.left, .right { border: 5px solid transparent; }
.left { border-left: 0; border-right-color: #a3a3a3; }
.right { border-right: 0; border-left-color: #505050; }

/* Site */
.navbar { flex: none; height: 70px; background: #212529; }
.navbar-inner {
  display: flex;
  align-items: center;
  justify-content: space-between;
  max-width: 1530px;
  height: 100%;
  margin: 0 auto;
}
.brand { color: #fff; font-size: 25px; text-decoration: none; }
.menu { display: flex; align-items: baseline; margin: 0; padding: 0; list-style: none; }
.menu a {
  display: block;
  padding: 0 10px;
  color: #9b9d9f;
  font: 22px/30px "Noto Sans CJK KR", sans-serif;
  text-decoration: none;
}
.menu .latin { font: 20px/30px "Open Sans", sans-serif; }
.dropdown::after {
  content: "";
  display: inline-block;
  margin-left: 5px;
  vertical-align: 5px;
  border: 6px solid transparent;
  border-top-color: currentColor;
  border-bottom: 0;
}
main { max-width: 1286px; width: 100%; margin: 0 auto; padding: 54px 0 0 15px; }
h1 {
  margin: 0 15px 62px 0;
  font: bold 44px/62px "Noto Sans CJK KR", sans-serif;
  text-align: center;
}
.detail { display: grid; grid-template-columns: 452fr 804fr; gap: 15px; }
.info { padding-top: 64px; }
h2 {
  margin: 0;
  padding-bottom: 12px;
  border-bottom: 3px solid #212529;
  font: 300 32px/50px "Noto Sans CJK KR", sans-serif;
  text-align: center;
}
table { width: 100%; border-collapse: separate; border-spacing: 0; }
th, td {
  padding: 15px 0;
  border-bottom: 1px solid #dee2e6;
  font: 300 21px/30px "Noto Sans CJK KR", sans-serif;
  text-align: center;
}
th { width: 219px; font-weight: bold; }
tr:nth-child(even) > * { padding-bottom: 16px; }
.num { font: 19px/30px "Open Sans", sans-serif; }
footer { flex: 1; background: #212529; }

/* Map */
.map { width: 100%; height: auto; overflow: hidden; }
.building { fill: #f9f8f5; stroke: #cfcdc5; stroke-width: 3px; }
.casing { --edge: 7px; stroke: #b3b2ae; }
.surface { --edge: 0px; stroke: #fff; }
#roads path { fill: none; stroke-linecap: round; stroke-linejoin: round; stroke-width: calc(var(--w) + var(--edge)); }
.w12 { --w: 11px; }
.w14 { --w: 14px; }
.w20 { --w: 19px; }
.w22 { --w: 22px; }
.w24 { --w: 24px; }
.w34 { --w: 32px; }
.w38 { --w: 36px; }
.w42 { --w: 42px; }
.w60 { --w: 56px; }
.w145 { --w: 143px; }
.map text {
  font-family: "Noto Sans CJK KR", sans-serif;
  text-anchor: middle;
  paint-order: stroke;
  stroke: #fff;
  stroke-width: 3px;
  stroke-linejoin: round;
}
.poi text { font-size: 14px; font-weight: 500; fill: #333; }
.school text { fill: #455d7e; }
.apartment text { fill: #66523c; }
.street text { font-size: 12px; fill: #8b8b8b; }
.map .along { text-anchor: start; }
.map .subway { font-size: 13px; font-weight: bold; fill: #ff7d20; }
.parking text { font: bold 14px "Open Sans", sans-serif; fill: #444; }
.icons { color: #4a4a4a; fill: #4a4a4a; }
.map .scale, .map .kakao { text-anchor: start; fill: #111; font-size: 12px; font-weight: 500; }
.map .kakao { font-size: 15px; }
.map .price { font: 600 18px "Open Sans", sans-serif; fill: #fff; stroke: none; }
```
